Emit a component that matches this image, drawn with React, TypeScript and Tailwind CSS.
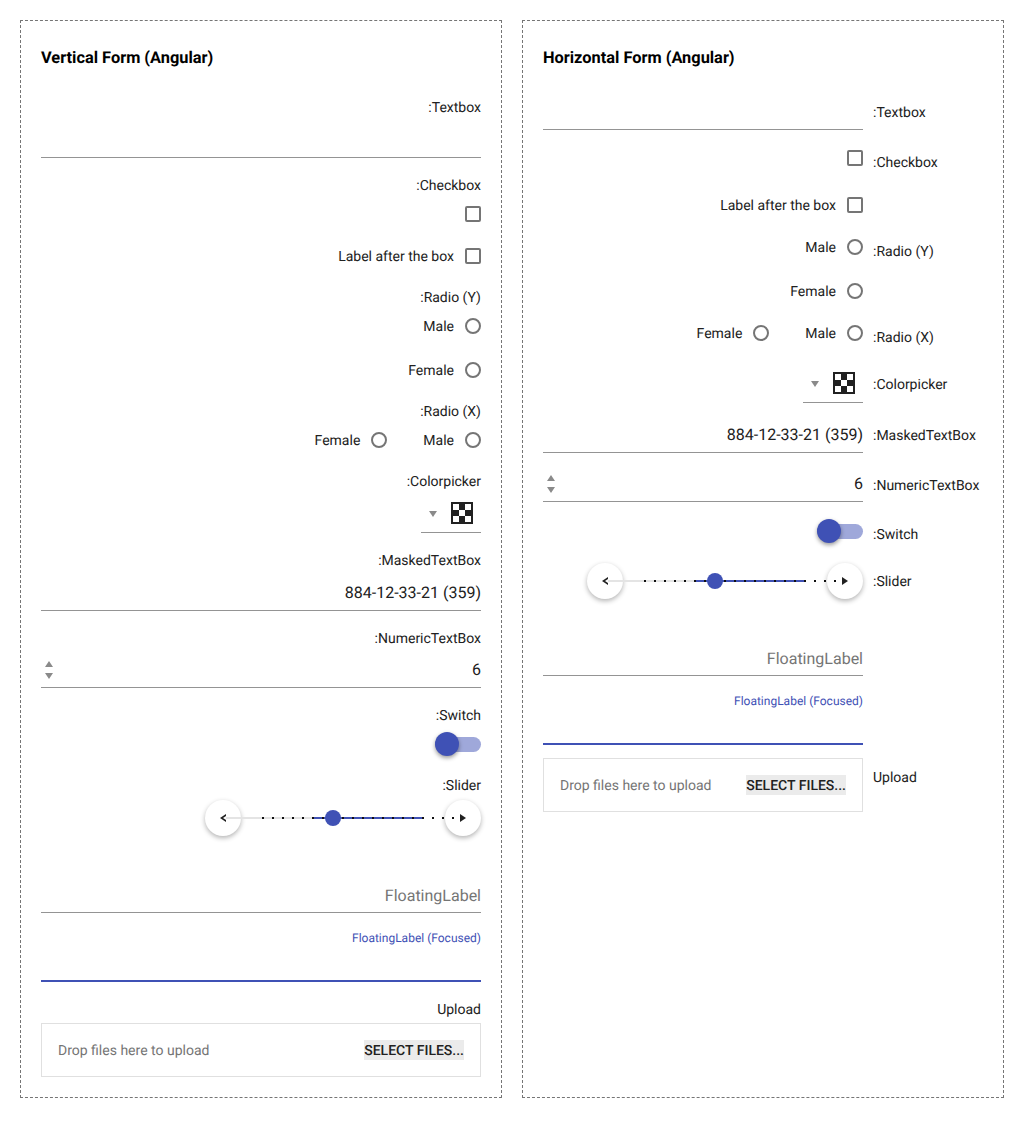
import type { ReactNode } from 'react';

const font = { fontFamily: 'Roboto, sans-serif' };

// Right aligned caption above a control
function Label({ children, className = '' }: { children: ReactNode; className?: string }) {
  return <div className={`h-5 pt-px text-right text-[14px] leading-5 text-[#212121] ${className}`}>{children}</div>;
}

function SideLabel({ children, className = '' }: { children: ReactNode; className?: string }) {
  return <div className={`ml-[10px] h-5 whitespace-nowrap pt-px text-[14px] leading-5 text-[#212121] ${className}`}>{children}</div>;
}

function Check({ label }: { label?: string }) {
  return (
    <div className="flex h-[38px] items-center justify-end">
      {label && <span className="mr-[11px] pt-[2px] text-[14px] text-[#212121]">{label}</span>}
      <span className="h-4 w-4 rounded-[2px] border-2 border-[#757575]" />
    </div>
  );
}

function RadioItem({ label }: { label: string }) {
  return (
    <div className="flex items-center">
      <span className="mr-[11px] pt-[2px] text-[14px] text-[#212121]">{label}</span>
      <span className="h-4 w-4 rounded-full border-2 border-[#757575]" />
    </div>
  );
}

function Radio({ label }: { label: string }) {
  return (
    <div className="flex h-[38px] items-center justify-end">
      <RadioItem label={label} />
    </div>
  );
}

function RadioRow() {
  return (
    <div className="flex h-[38px] items-center justify-end gap-9">
      <RadioItem label="Female" />
      <RadioItem label="Male" />
    </div>
  );
}

function Swatch() {
  return (
    <svg width="22" height="22" viewBox="0 0 22 22">
      <rect width="22" height="22" fill="#212121" />
      <rect x="2" y="2" width="6" height="6" fill="#fff" />
      <rect x="14" y="2" width="6" height="6" fill="#fff" />
      <rect x="8" y="8" width="6" height="6" fill="#fff" />
      <rect x="2" y="14" width="6" height="6" fill="#fff" />
      <rect x="14" y="14" width="6" height="6" fill="#fff" />
    </svg>
  );
}

function Colorpicker() {
  return (
    <div className="flex justify-end">
      <div className="flex h-[42px] w-[60px] items-center border-b border-[#949494] pl-[8px] pt-[3px]">
        <svg width="8" height="6" viewBox="0 0 8 6" className="mt-[2px]">
          <path d="M0 0h8L4 6z" fill="#8a8a8a" />
        </svg>
        <span className="ml-[14px] flex">
          <Swatch />
        </span>
      </div>
    </div>
  );
}

function Masked() {
  return (
    <div className="flex h-[41px] items-center justify-end border-b border-[#949494] pt-[6px] text-[16px] text-[#212121]">
      884-12-33-21 (359)
    </div>
  );
}

function Numeric() {
  return (
    <div className="flex h-10 items-center justify-between border-b border-[#949494] pt-[5px] text-[16px] text-[#212121]">
      <svg width="10" height="19" viewBox="0 0 10 19" className="ml-[3px]">
        <path d="M1 6l4-6 4 6zM1 12h8l-4 6z" fill="#8a8a8a" />
      </svg>
      6
    </div>
  );
}

function Switch() {
  return (
    <div className="flex h-[38px] items-center justify-end">
      <div className="relative h-[15px] w-[46px] rounded-full bg-[#9fa8da]">
        <span className="absolute left-0 top-[-4.5px] h-6 w-6 rounded-full bg-[#3f51b5] shadow-[0_2px_4px_rgba(0,0,0,0.4)]" />
      </div>
    </div>
  );
}

const sliderTicks = Array.from({ length: 20 }, (_, i) => 57 + i * 10);

function Slider() {
  return (
    <div className="flex justify-end">
      <div className="relative h-9 w-[276px]">
        <span className="absolute left-0 top-0 h-9 w-9 rounded-full bg-white shadow-[0_2px_5px_rgba(0,0,0,0.3)]" />
        <span className="absolute right-0 top-0 h-9 w-9 rounded-full bg-white shadow-[0_2px_5px_rgba(0,0,0,0.3)]" />
        <svg width="276" height="36" viewBox="0 0 276 36" className="absolute left-0 top-0">
          <path d="M21 14l-6 4 6 4v-2l-3-2 3-2z" fill="#212121" />
          <rect x="21" y="17" width="86" height="2" fill="#e4e4e4" />
          <rect x="107" y="17" width="111" height="2" fill="#3f51b5" />
          {sliderTicks.map((x) => (
            <rect key={x} x={x} y="17" width="2" height="2" fill="#111" />
          ))}
          <path d="M255 14l6 4-6 4z" fill="#212121" />
          <circle cx="128" cy="18" r="8" fill="#3f51b5" />
        </svg>
      </div>
    </div>
  );
}

function Floating() {
  return (
    <div className="flex h-[41px] items-center justify-end border-b border-[#949494] pt-[8px] text-[16px] text-[#757575]">
      FloatingLabel
    </div>
  );
}

function FloatingFocused({ className = '' }: { className?: string }) {
  return (
    <div className={className}>
      <div className="h-5 text-right text-[12px] leading-5 text-[#3f51b5]">FloatingLabel (Focused)</div>
      <div className="h-[34px] border-b-2 border-[#3f51b5]" />
    </div>
  );
}

function Upload({ className = '' }: { className?: string }) {
  return (
    <div className={`flex h-[54px] items-center justify-between border border-[#e0e0e0] px-4 text-[14px] ${className}`}>
      <span className="pt-[2px] text-[#757575]">Drop files here to upload</span>
      <span className="h-5 bg-[#ebebeb] pt-px font-medium leading-5 text-[#212121]">SELECT FILES...</span>
    </div>
  );
}

function Card({ title, children }: { title: string; children: ReactNode }) {
  return (
    <div className="flex-1 border border-dashed border-[#757575] px-5 pb-5 pt-[25px]">
      <h2 className="h-[23px] text-[16.38px] font-bold leading-6 text-black">{title}</h2>
      {children}
    </div>
  );
}

function Row({ className = '', children }: { className?: string; children: ReactNode }) {
  return <div className={`flex items-start ${className}`}>{children}</div>;
}

function VerticalForm() {
  return (
    <Card title="Vertical Form (Angular)">
      <Label className="mt-7">:Textbox</Label>
      <div className="h-[41px] border-b border-[#949494]" />
      <Label className="mt-[17px]">:Checkbox</Label>
      <Check />
      <div className="mt-1">
        <Check label="Label after the box" />
      </div>
      <Label className="mt-3">:Radio (Y)</Label>
      <Radio label="Male" />
      <div className="mt-[6px]">
        <Radio label="Female" />
      </div>
      <Label className="mt-3">:Radio (X)</Label>
      <RadioRow />
      <Label className="mt-3">:Colorpicker</Label>
      <Colorpicker />
      <Label className="mt-[17px]">:MaskedTextBox</Label>
      <Masked />
      <Label className="mt-[17px]">:NumericTextBox</Label>
      <Numeric />
      <Label className="mt-[17px]">:Switch</Label>
      <Switch />
      <Label className="mt-3">:Slider</Label>
      <div className="mt-[5px]">
        <Slider />
      </div>
      <div className="mt-9">
        <Floating />
      </div>
      <FloatingFocused className="mt-[15px]" />
      <Label className="mt-[17px]">Upload</Label>
      <Upload className="mt-1" />
    </Card>
  );
}

function HorizontalForm() {
  return (
    <Card title="Horizontal Form (Angular)">
      <Row className="mt-[26px]">
        <div className="h-[35px] w-[320px] border-b border-[#949494]" />
        <SideLabel className="mt-[7px]">:Textbox</SideLabel>
      </Row>
      <Row className="mt-[9px]">
        <div className="w-[320px]">
          <Check />
        </div>
        <SideLabel className="mt-[13px]">:Checkbox</SideLabel>
      </Row>
      <Row className="mt-[9px]">
        <div className="w-[320px]">
          <Check label="Label after the box" />
        </div>
      </Row>
      <Row className="mt-1">
        <div className="w-[320px]">
          <Radio label="Male" />
        </div>
        <SideLabel className="mt-[13px]">:Radio (Y)</SideLabel>
      </Row>
      <Row className="mt-[6px]">
        <div className="w-[320px]">
          <Radio label="Female" />
        </div>
      </Row>
      <Row className="mt-1">
        <div className="w-[320px]">
          <RadioRow />
        </div>
        <SideLabel className="mt-[13px]">:Radio (X)</SideLabel>
      </Row>
      <Row className="mt-[9px]">
        <div className="w-[320px]">
          <Colorpicker />
        </div>
        <SideLabel className="mt-[13px]">:Colorpicker</SideLabel>
      </Row>
      <Row className="mt-[9px]">
        <div className="w-[320px]">
          <Masked />
        </div>
        <SideLabel className="mt-[13px]">:MaskedTextBox</SideLabel>
      </Row>
      <Row className="mt-[9px]">
        <div className="w-[320px]">
          <Numeric />
        </div>
        <SideLabel className="mt-[13px]">:NumericTextBox</SideLabel>
      </Row>
      <Row className="mt-[10px]">
        <div className="w-[320px]">
          <Switch />
        </div>
        <SideLabel className="mt-3">:Switch</SideLabel>
      </Row>
      <Row className="mt-[13px]">
        <div className="w-[320px]">
          <Slider />
        </div>
        <SideLabel className="mt-2">:Slider</SideLabel>
      </Row>
      <div className="mt-9 w-[320px]">
        <Floating />
      </div>
      <FloatingFocused className="mt-[15px] w-[320px]" />
      <Row className="mt-[13px]">
        <Upload className="w-[320px]" />
        <SideLabel className="mt-[9px]">Upload</SideLabel>
      </Row>
    </Card>
  );
}

export default function App() {
  return (
    <div className="flex gap-5 bg-white p-5 [text-rendering:geometricPrecision]" style={font}>
      <VerticalForm />
      <HorizontalForm />
    </div>
  );
}
